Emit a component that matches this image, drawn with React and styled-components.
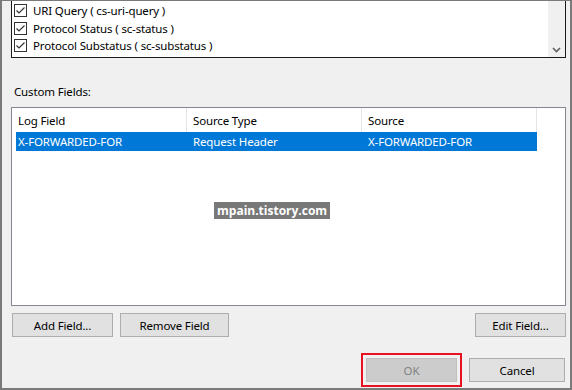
import React from 'react'
import styled, { createGlobalStyle } from 'styled-components'

const GlobalStyle = createGlobalStyle`
  html, body { margin: 0; padding: 0; background: #f0f0f0; }
  body { font-family: "Noto Sans", "Segoe UI", sans-serif; font-size: 11.5px; letter-spacing: -0.15px; color: #000; }
`

const Window = styled.div`
  box-sizing: border-box;
  width: 572px;
  height: 390px;
  background: #f0f0f0;
  border: 2px solid #7a7a7a;
  border-top-width: 1px;
  padding: 0 4px 0 9px;
  display: flex;
  flex-direction: column;
  position: relative;
  overflow: hidden;
`

const CheckList = styled.div`
  box-sizing: border-box;
  height: 57px;
  background: #fff;
  border: 1px solid #1a1a1a;
  border-top: none;
  display: flex;
`

const CheckRows = styled.div`
  flex: 1;
  padding: 1px 0 0 2px;
`

const CheckRow = styled.div`
  height: 17.5px;
  display: flex;
  align-items: center;
  gap: 6px;
  white-space: nowrap;
`

const Box = styled.span`
  box-sizing: border-box;
  width: 13px;
  height: 13px;
  border: 1px solid #333;
  background: #fff;
  display: flex;
  align-items: center;
  justify-content: center;
`

const ScrollBar = styled.div`
  width: 17px;
  background: #f0f0f0;
  display: flex;
  flex-direction: column;
  justify-content: flex-end;
  align-items: center;
  padding-bottom: 4px;
`

const Label = styled.div`
  margin: 25px 0 0 3px;
  height: 18px;
  line-height: 18px;
`

const ListView = styled.div`
  box-sizing: border-box;
  margin-top: 6px;
  height: 199px;
  background: #fff;
  border: 1px solid #828790;
`

const HeaderRow = styled.div`
  display: flex;
  height: 24px;
`

const HeaderCell = styled.div`
  box-sizing: border-box;
  width: ${p => p.$w}px;
  padding-left: ${p => p.$pad}px;
  border-right: 1px solid #e5e5e5;
  display: flex;
  align-items: center;
  color: #000;
`

const DataRow = styled.div`
  display: flex;
  margin-left: 4px;
  width: 521px;
  height: 19px;
  background: ${p => (p.$selected ? '#0078d7' : 'transparent')};
  color: ${p => (p.$selected ? '#fff' : '#000')};
`

const DataCell = styled.div`
  box-sizing: border-box;
  width: ${p => p.$w}px;
  padding-left: ${p => p.$pad}px;
  display: flex;
  align-items: center;
`

const ButtonRow = styled.div`
  display: flex;
  gap: 7px;
  margin-top: 7px;
  padding-left: 1px;
  align-items: center;
`

const Button = styled.button`
  box-sizing: border-box;
  width: ${p => p.$w}px;
  height: 24px;
  background: ${p => (p.disabled ? '#cccccc' : '#e1e1e1')};
  border: 1px solid ${p => (p.disabled ? '#bfbfbf' : '#adadad')};
  color: ${p => (p.disabled ? '#838383' : '#000')};
  font-family: inherit;
  font-size: inherit;
  letter-spacing: inherit;
  padding: 0;
  margin: 0;
`

const Spacer = styled.div`
  flex: 1;
`

const FooterRow = styled.div`
  display: flex;
  justify-content: flex-end;
  align-items: center;
  gap: 7px;
  margin-top: 16px;
  padding-right: 1px;
`

const FocusFrame = styled.div`
  border: 2px solid #e81123;
  padding: 3px;
  display: flex;
`

const Watermark = styled.div`
  position: absolute;
  left: 212px;
  top: 201px;
  background: #787878;
  color: #fff;
  font-weight: bold;
  font-size: 12px;
  letter-spacing: 0;
  line-height: 17px;
  padding: 0 3px;
  font-family: "Open Sans", "Noto Sans", sans-serif;
`

const Check = () => (
  <Box>
    <svg width="11" height="11" viewBox="0 0 11 11">
      <path d="M1.5 5.5 L4 8 L9.5 2.5" fill="none" stroke="#333" strokeWidth="1.2" />
    </svg>
  </Box>
)

const checks = ['URI Query ( cs-uri-query )', 'Protocol Status ( sc-status )', 'Protocol Substatus ( sc-substatus )']

const columns = [
  { title: 'Log Field', w: 175, pad: 6 },
  { title: 'Source Type', w: 175, pad: 6 },
  { title: 'Source', w: 175, pad: 6 },
]

const rows = [{ field: 'X-FORWARDED-FOR', type: 'Request Header', source: 'X-FORWARDED-FOR', selected: true }]

export default function App() {
  return (
    <>
      <GlobalStyle />
      <Window>
        <CheckList>
          <CheckRows>
            {checks.map(c => (
              <CheckRow key={c}>
                <Check />
                {c}
              </CheckRow>
            ))}
          </CheckRows>
          <ScrollBar>
            <svg width="9" height="6" viewBox="0 0 9 6">
              <path d="M1 1 L4.5 4.5 L8 1" fill="none" stroke="#606060" strokeWidth="1.6" />
            </svg>
          </ScrollBar>
        </CheckList>
        <Label>Custom Fields:</Label>
        <ListView>
          <HeaderRow>
            {columns.map(c => (
              <HeaderCell key={c.title} $w={c.w} $pad={c.pad}>{c.title}</HeaderCell>
            ))}
          </HeaderRow>
          {rows.map(r => (
            <DataRow key={r.field} $selected={r.selected}>
              <DataCell $w={171} $pad={2}>{r.field}</DataCell>
              <DataCell $w={175} $pad={6}>{r.type}</DataCell>
              <DataCell $w={175} $pad={6}>{r.source}</DataCell>
            </DataRow>
          ))}
        </ListView>
        <ButtonRow>
          <Button $w={101}>Add Field...</Button>
          <Button $w={109}>Remove Field</Button>
          <Spacer />
          <Button $w={91}>Edit Field...</Button>
        </ButtonRow>
        <FooterRow>
          <FocusFrame>
            <Button $w={91} disabled>OK</Button>
          </FocusFrame>
          <Button $w={96}>Cancel</Button>
        </FooterRow>
        <Watermark>mpain.tistory.com</Watermark>
      </Window>
    </>
  )
}
